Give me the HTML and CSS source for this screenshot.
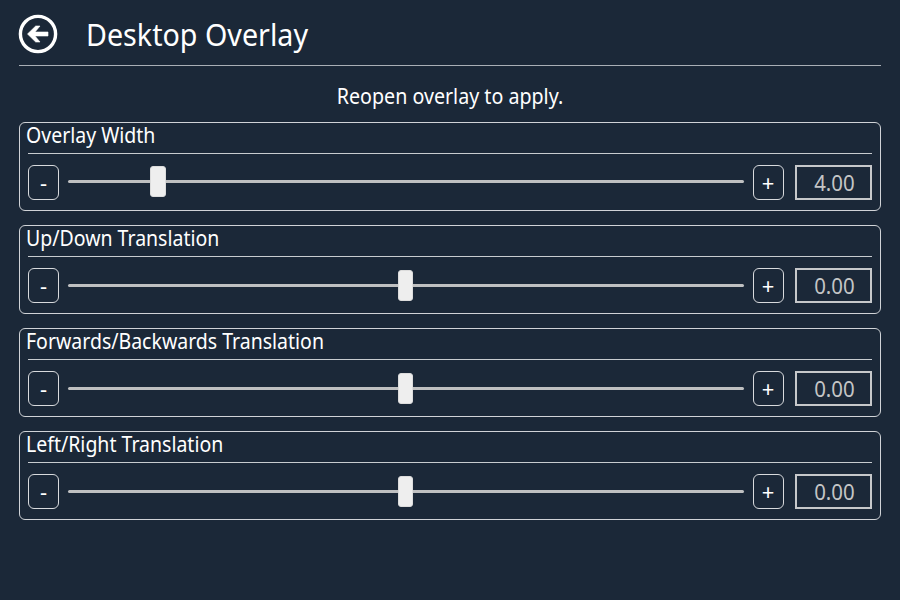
FILE: index.html
```html
<!DOCTYPE html>
<html lang="en">
<head>
<meta charset="utf-8">
<title>Desktop Overlay</title>
<link rel="stylesheet" href="styles.css">
</head>
<body>
<header class="header">
  <svg class="back" viewBox="0 0 40 40"><circle class="ring" cx="20" cy="20" r="17.6"/><path class="arrow" d="M9.5 20 17.7 12H22L17 18H30V22H17L22 28H17.7Z"/></svg>
  <h1 class="title">Desktop Overlay</h1>
</header>
<p class="note">Reopen overlay to apply.</p>
<main class="groups">
  <section class="group">
    <h2 class="label"><span class="name">Overlay Width</span></h2>
    <div class="row"><button class="step">-</button><div class="track"><i class="thumb" style="left:13.4%"></i></div><button class="step">+</button><div class="value"><span class="num">4.00</span></div></div>
  </section>
  <section class="group">
    <h2 class="label"><span class="name">Up/Down Translation</span></h2>
    <div class="row"><button class="step">-</button><div class="track"><i class="thumb" style="left:50%"></i></div><button class="step">+</button><div class="value"><span class="num">0.00</span></div></div>
  </section>
  <section class="group">
    <h2 class="label"><span class="name">Forwards/Backwards Translation</span></h2>
    <div class="row"><button class="step">-</button><div class="track"><i class="thumb" style="left:50%"></i></div><button class="step">+</button><div class="value"><span class="num">0.00</span></div></div>
  </section>
  <section class="group">
    <h2 class="label"><span class="name">Left/Right Translation</span></h2>
    <div class="row"><button class="step">-</button><div class="track"><i class="thumb" style="left:50%"></i></div><button class="step">+</button><div class="value"><span class="num">0.00</span></div></div>
  </section>
</main>
</body>
</html>
```
FILE: styles.css
```css
* { box-sizing: border-box; }
body { margin: 0; height: 600px; padding: 0 19px; background: #1b2838; color: #fff; font-family: "Noto Sans", sans-serif; overflow: hidden; }
.header { height: 66px; display: flex; align-items: flex-start; padding-top: 14px; border-bottom: 1px solid #a9afb6; }
.back { width: 40px; height: 40px; margin-left: -1px; }
.ring { fill: none; stroke: #fff; stroke-width: 3.4; }
.arrow { fill: #fff; stroke: #fff; stroke-width: .6; stroke-linejoin: round; }
.title { margin: 0 0 0 28px; font-size: 31px; line-height: 41px; font-weight: 400; transform: scaleX(.925); transform-origin: left; }
.note { margin: 17px 0 0; line-height: 26px; text-align: center; font-size: 21.5px; transform: scaleX(.914); }
.groups { display: grid; gap: 14px; margin-top: 13px; }
.group { height: 89.1px; border: 1px solid #d0d3d7; border-radius: 6px; padding: 0 8px; }
.label { margin: 0; height: 31px; border-bottom: 1px solid #c8ccd0; font-size: 21.5px; line-height: 23px; font-weight: 400; }
.name { display: inline-block; margin-left: -2px; transform: scaleX(.907); transform-origin: left; }
.row { display: flex; align-items: center; margin-top: 11px; height: 35px; }
.step { width: 31px; height: 35px; padding: 0 0 2px; border: 1px solid #d8dadd; border-radius: 6px; background: none; color: #fff; font: 22px/30px "Noto Sans", sans-serif; }
.track { position: relative; top: -.6px; flex: 1; height: 3px; margin: 0 8.5px; background: #bfc0c1; border-radius: 2px; }
.thumb { position: absolute; top: -14px; width: 15.5px; height: 31px; margin-left: -8px; border-radius: 3px; background: #eee; border: 1px solid #dcdcdc; }
.value { width: 77px; height: 35px; margin-left: 11.5px; padding-right: 15px; border: 2px solid #c6c8ca; color: #c4c5c6; font-size: 21.5px; line-height: 31px; text-align: right; }
.num { display: inline-block; transform: scaleX(.95); transform-origin: right; }
```
